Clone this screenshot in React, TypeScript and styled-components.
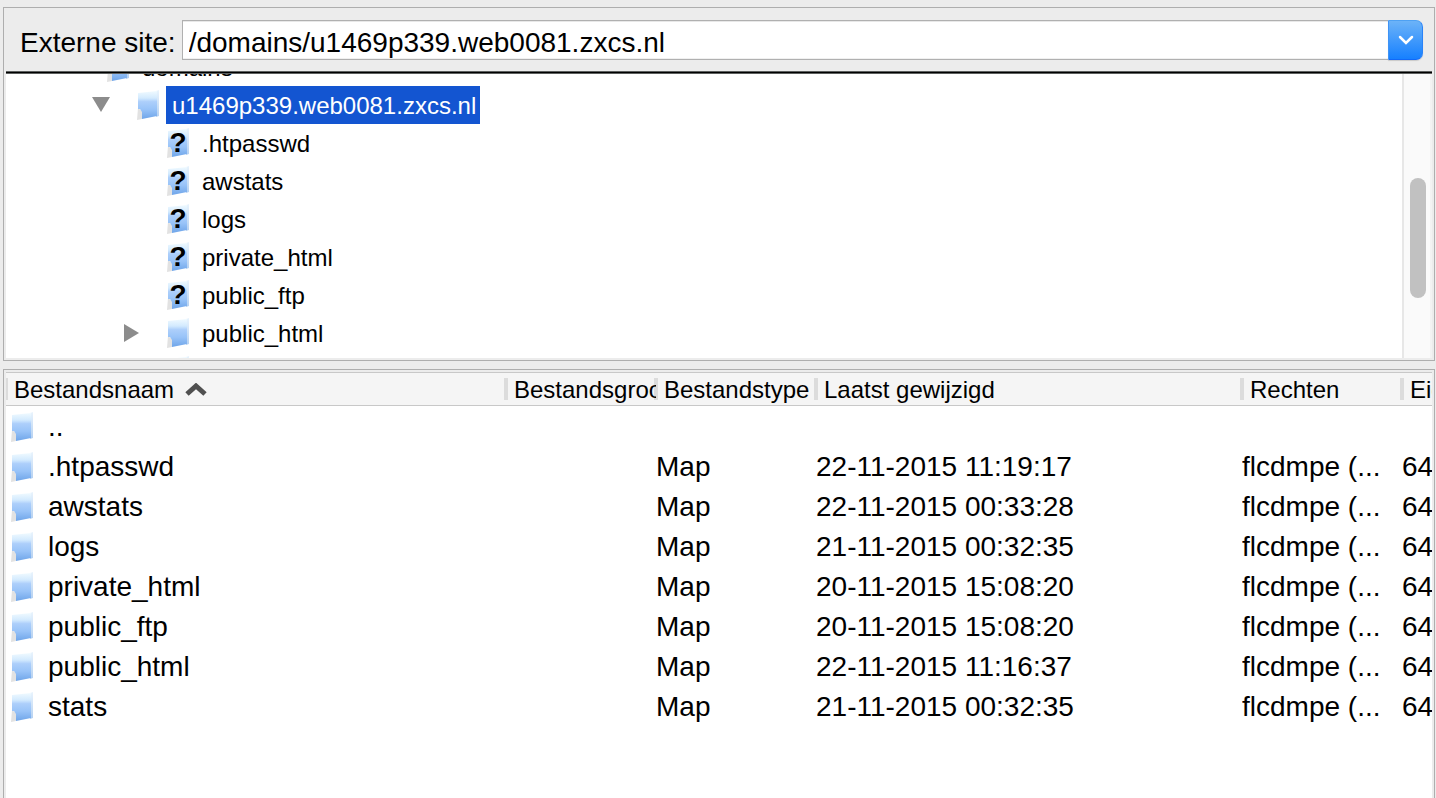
import React from "react";
import styled, { createGlobalStyle } from "styled-components";

const Global = createGlobalStyle`
  *, *::before, *::after { box-sizing: border-box; }
  html, body, #root { height: 100%; }
  body {
    margin: 0;
    background: #ececec;
    color: #000;
    font-family: "Liberation Sans", Arial, Helvetica, sans-serif;
    overflow: hidden;
  }
`;

const Window = styled.main`
  height: 100vh;
  padding: 7px 1px 0 3px;
  display: flex;
  flex-direction: column;
  gap: 8px;
`;

const Panel = styled.section<{ $fill?: boolean }>`
  border: 1px solid #aeaeae;
  padding: 0 2px 2px;
  ${(p) => (p.$fill ? "flex: 1; min-height: 0; border-bottom: 0; padding: 2px 2px 0; overflow: hidden;" : "flex: none;")}
`;

const SiteBar = styled.form`
  display: flex;
  align-items: center;
  height: 63px;
  padding: 0 9px 0 14px;
  gap: 6px;
`;

const SiteLabel = styled.label`
  padding-top: 6px;
  font-size: 28px;
  line-height: 40px;
  white-space: nowrap;
`;

const Combo = styled.div`
  display: flex;
  flex: 1;
  height: 40px;
`;

const PathInput = styled.input`
  flex: 1;
  min-width: 0;
  border: 1px solid #b0b0b0;
  border-right: 0;
  border-radius: 0;
  padding: 6px 6px 0;
  background: #fff;
  box-shadow: inset 0 1px 0 #e8e8e8, inset 0 -1px 0 #f0f0f0;
  font-family: inherit;
  font-size: 28px;
  line-height: 32px;
  color: #000;
  outline: none;
`;

const DropButton = styled.button`
  display: flex;
  align-items: center;
  justify-content: center;
  width: 35px;
  padding: 0;
  border: 1px solid;
  border-color: #4ea1f3 #2a83f8 #1169f8 #3f93f5;
  border-radius: 0 7px 7px 0;
  background: linear-gradient(#6cb3f8, #1680ff);
  box-shadow: 0 1px 1px rgba(0, 0, 0, 0.15);
`;

const TreePane = styled.div`
  display: flex;
  height: 287px;
  border-top: 3px solid #000;
  border-image: linear-gradient(#5c5f5e 0 1px, #000 1px 2px, #5c5f5e 2px 3px) 3;
  background: #fff;
  overflow: hidden;
`;

const TreeList = styled.ul`
  flex: 1;
  margin: -26px 0 0;
  padding: 0;
  list-style: none;
`;

const TreeRow = styled.li<{ $level: number }>`
  display: flex;
  align-items: center;
  height: 38px;
  padding-left: ${(p) => 56 + p.$level * 30}px;
  font-size: 24px;
  line-height: 38px;
  white-space: nowrap;
`;

const Twisty = styled.span`
  display: flex;
  align-items: center;
  width: 45px;
`;

const TreeLabel = styled.span<{ $selected?: boolean }>`
  height: 38px;
  margin-left: 6px;
  padding: 2px 4px 0 6px;
  line-height: 36px;
  ${(p) => p.$selected && "background: #1355d1; color: #fff;"}
`;

const ScrollTrack = styled.div`
  flex: none;
  width: 30px;
  padding: 104px 6px 0;
  border-left: 2px solid #e7e7e7;
  border-right: 2px solid #f3f3f3;
  background: #fafafa;
`;

const ScrollThumb = styled.div`
  width: 16px;
  height: 120px;
  border-radius: 8px;
  background: #c1c1c1;
`;

const FileTable = styled.table`
  width: 100%;
  table-layout: fixed;
  border-collapse: separate;
  border-spacing: 0;
  background: #fff;
`;

const ListArea = styled.div`
  height: 100%;
  background: #fff;
  overflow: hidden;
`;

const HeadCell = styled.th<{ $width?: number }>`
  position: relative;
  width: ${(p) => (p.$width ? `${p.$width}px` : "auto")};
  height: 34px;
  padding: 2px 0 0 8px;
  border-top: 1px solid #c8c8c8;
  border-bottom: 1px solid #c8c8c8;
  background: #f5f5f5;
  font-size: 24px;
  font-weight: 400;
  line-height: 30px;
  text-align: left;
  white-space: nowrap;

  &::before {
    content: "";
    position: absolute;
    top: 5px;
    left: -2px;
    width: 4px;
    height: 22px;
    background: #dcdcdc;
  }
`;

const HeadText = styled.span`
  position: relative;
  z-index: 1;
  display: flex;
  align-items: center;
  gap: 11px;
  overflow: hidden;
`;

const Cell = styled.td`
  height: 40px;
  padding: 2px 0 0;
  font-size: 28px;
  line-height: 38px;
  white-space: nowrap;
  overflow: hidden;
`;

const FileName = styled.span`
  display: flex;
  align-items: center;
  gap: 14px;
  padding-left: 5px;
`;

function FolderIcon({ unknown = false }: { unknown?: boolean }) {
  return (
    <svg width="23" height="32" viewBox="0 0 23 32" aria-hidden="true">
      <defs>
        <linearGradient id="folder" x1="0" y1="0" x2="0" y2="1">
          <stop offset="0" stopColor="#f0faff" />
          <stop offset="0.25" stopColor="#d3eafe" />
          <stop offset="0.38" stopColor="#adcffb" />
          <stop offset="0.65" stopColor="#98c3f8" />
          <stop offset="1" stopColor="#6fa5e9" />
        </linearGradient>
        <linearGradient id="folder-edge" x1="0" y1="0" x2="0" y2="1">
          <stop offset="0" stopColor="#e9f4fd" />
          <stop offset="1" stopColor="#b4d0f1" />
        </linearGradient>
      </defs>
      <path d="M1 19l4 3v8l-5 1z" fill="#e2e2e2" />
      <path d="M19 2l3-1v26l-3 1z" fill="url(#folder-edge)" />
      <path d="M1 4L20 2v25L5 30v-7l-2-3H1z" fill="url(#folder)" />
      {unknown && (
        <text x="11" y="25" textAnchor="middle" fontFamily="Liberation Sans" fontWeight="700" fontSize="28">
          ?
        </text>
      )}
    </svg>
  );
}

type Node = { name: string; level: number; open?: boolean; closed?: boolean; unknown?: boolean; selected?: boolean };

const nodes: Node[] = [
  { name: "domains", level: 0, open: true },
  { name: "u1469p339.web0081.zxcs.nl", level: 1, open: true, selected: true },
  { name: ".htpasswd", level: 2, unknown: true },
  { name: "awstats", level: 2, unknown: true },
  { name: "logs", level: 2, unknown: true },
  { name: "private_html", level: 2, unknown: true },
  { name: "public_ftp", level: 2, unknown: true },
  { name: "public_html", level: 2, closed: true },
  { name: "stats", level: 2 },
];

const files = [
  ["..", ""],
  [".htpasswd", "22-11-2015 11:19:17"],
  ["awstats", "22-11-2015 00:33:28"],
  ["logs", "21-11-2015 00:32:35"],
  ["private_html", "20-11-2015 15:08:20"],
  ["public_ftp", "20-11-2015 15:08:20"],
  ["public_html", "22-11-2015 11:16:37"],
  ["stats", "21-11-2015 00:32:35"],
];

export default function App() {
  return (
    <>
      <Global />
      <Window>
        <Panel>
          <SiteBar onSubmit={(e) => e.preventDefault()}>
            <SiteLabel htmlFor="remote-path">Externe site:</SiteLabel>
            <Combo>
              <PathInput id="remote-path" type="text" defaultValue="/domains/u1469p339.web0081.zxcs.nl" />
              <DropButton type="button" aria-label="Recente mappen">
                <svg width="16" height="10" viewBox="0 0 16 10" aria-hidden="true">
                  <path d="M2 2l6 6 6-6" fill="none" stroke="#fff" strokeWidth="2.5" strokeLinecap="round" />
                </svg>
              </DropButton>
            </Combo>
          </SiteBar>
          <TreePane>
            <TreeList>
              {nodes.map((n) => (
                <TreeRow key={n.name} $level={n.level}>
                  <Twisty>
                    {n.open && (
                      <svg width="18" height="16" viewBox="0 0 18 16" aria-hidden="true">
                        <path d="M0 0h18L9 15z" fill="#8c8c8c" />
                      </svg>
                    )}
                    {n.closed && (
                      <svg width="18" height="18" viewBox="0 0 18 18" aria-hidden="true">
                        <path d="M2 0v18l15-9z" fill="#8c8c8c" />
                      </svg>
                    )}
                  </Twisty>
                  <FolderIcon unknown={n.unknown} />
                  <TreeLabel $selected={n.selected}>{n.name}</TreeLabel>
                </TreeRow>
              ))}
            </TreeList>
            <ScrollTrack>
              <ScrollThumb />
            </ScrollTrack>
          </TreePane>
        </Panel>
        <Panel $fill>
          <ListArea>
            <FileTable>
              <thead>
                <tr>
                  <HeadCell $width={500}>
                    <HeadText>
                      Bestandsnaam
                      <svg width="22" height="14" viewBox="0 0 22 14" aria-hidden="true">
                        <path d="M2 11L11 3l9 8" fill="none" stroke="#505050" strokeWidth="5" />
                      </svg>
                    </HeadText>
                  </HeadCell>
                  <HeadCell $width={150}><HeadText>Bestandsgrootte</HeadText></HeadCell>
                  <HeadCell $width={160}><HeadText>Bestandstype</HeadText></HeadCell>
                  <HeadCell><HeadText>Laatst gewijzigd</HeadText></HeadCell>
                  <HeadCell $width={160}><HeadText>Rechten</HeadText></HeadCell>
                  <HeadCell $width={30}><HeadText>Eigenaar</HeadText></HeadCell>
                </tr>
              </thead>
              <tbody>
                {files.map(([name, date]) => (
                  <tr key={name}>
                    <Cell>
                      <FileName>
                        <FolderIcon />
                        {name}
                      </FileName>
                    </Cell>
                    <Cell />
                    <Cell>{date && "Map"}</Cell>
                    <Cell>{date}</Cell>
                    <Cell>{date && "flcdmpe (..."}</Cell>
                    <Cell>{date && "64"}</Cell>
                  </tr>
                ))}
              </tbody>
            </FileTable>
          </ListArea>
        </Panel>
      </Window>
    </>
  );
}
